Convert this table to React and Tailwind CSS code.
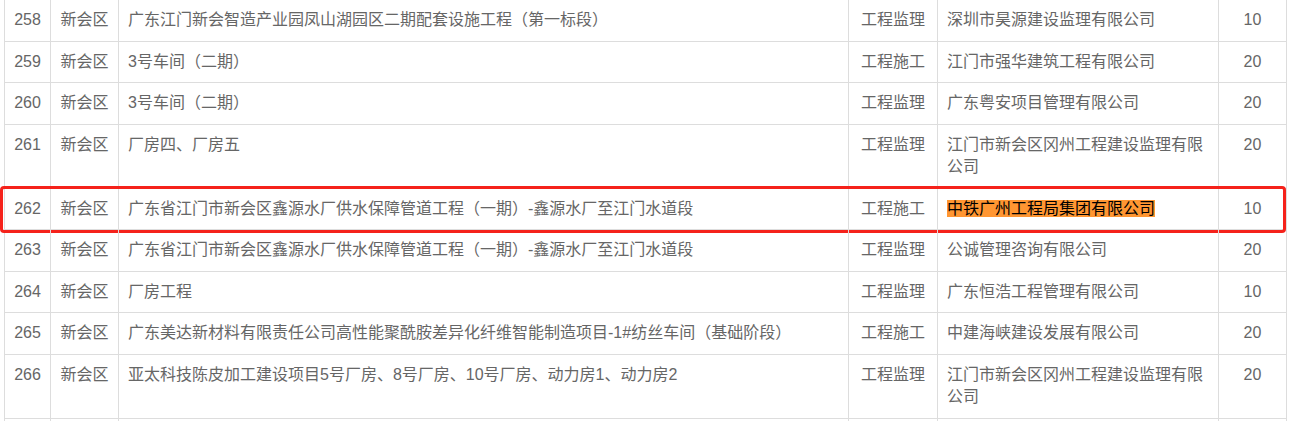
import React from 'react'

const rows = [
  { no: '258', area: '新会区', name: '广东江门新会智造产业园凤山湖园区二期配套设施工程（第一标段）', type: '工程监理', company: '深圳市昊源建设监理有限公司', score: '10' },
  { no: '259', area: '新会区', name: '3号车间（二期）', type: '工程施工', company: '江门市强华建筑工程有限公司', score: '20' },
  { no: '260', area: '新会区', name: '3号车间（二期）', type: '工程监理', company: '广东粤安项目管理有限公司', score: '20' },
  { no: '261', area: '新会区', name: '厂房四、厂房五', type: '工程监理', company: '江门市新会区冈州工程建设监理有限公司', score: '20' },
  { no: '262', area: '新会区', name: '广东省江门市新会区鑫源水厂供水保障管道工程（一期）-鑫源水厂至江门水道段', type: '工程施工', company: '中铁广州工程局集团有限公司', score: '10', marked: true },
  { no: '263', area: '新会区', name: '广东省江门市新会区鑫源水厂供水保障管道工程（一期）-鑫源水厂至江门水道段', type: '工程监理', company: '公诚管理咨询有限公司', score: '20' },
  { no: '264', area: '新会区', name: '厂房工程', type: '工程监理', company: '广东恒浩工程管理有限公司', score: '10' },
  { no: '265', area: '新会区', name: '广东美达新材料有限责任公司高性能聚酰胺差异化纤维智能制造项目-1#纺丝车间（基础阶段）', type: '工程施工', company: '中建海峡建设发展有限公司', score: '20' },
  { no: '266', area: '新会区', name: '亚太科技陈皮加工建设项目5号厂房、8号厂房、10号厂房、动力房1、动力房2', type: '工程监理', company: '江门市新会区冈州工程建设监理有限公司', score: '20' },
]

const cell = 'border-r border-[#ddd] pt-[9px] pb-[9px]'

function Row({ r }) {
  return (
    <div className="relative grid grid-cols-[46px_68px_730px_89px_281px_68px] border-b border-[#ddd]">
      <div className={`${cell} text-center`}>{r.no}</div>
      <div className={`${cell} text-center`}>{r.area}</div>
      <div className={`${cell} px-[9px]`}>{r.name}</div>
      <div className={`${cell} text-center`}>{r.type}</div>
      <div className={`${cell} px-[9px]`}>
        {r.marked ? (
          <span className="inline-block bg-[#ff9632] text-black leading-[17px]">{r.company}</span>
        ) : (
          r.company
        )}
      </div>
      <div className={`${cell} text-center`}>{r.score}</div>
      {r.marked && (
        <div className="absolute -left-[5px] -top-[3px] w-[1286px] h-[47px] border-[3px] border-[#f5221b] rounded-[4px] pointer-events-none" />
      )}
    </div>
  )
}

export default function App() {
  return (
    <div
      className="h-[421px] overflow-hidden bg-white text-[16px] leading-[22.5px] text-[#666]"
      style={{ fontFamily: '"Liberation Sans", "Noto Sans CJK SC", sans-serif' }}
    >
      <div className="ml-[4px] -mt-px border-l border-t border-[#ddd] w-[1283px]">
        {rows.map((r) => (
          <Row key={r.no} r={r} />
        ))}
        <div className="grid grid-cols-[46px_68px_730px_89px_281px_68px] h-[42px]">
          <div className={cell}></div>
          <div className={cell}></div>
          <div className={cell}></div>
          <div className={cell}></div>
          <div className={cell}></div>
          <div className={cell}></div>
        </div>
      </div>
    </div>
  )
}
